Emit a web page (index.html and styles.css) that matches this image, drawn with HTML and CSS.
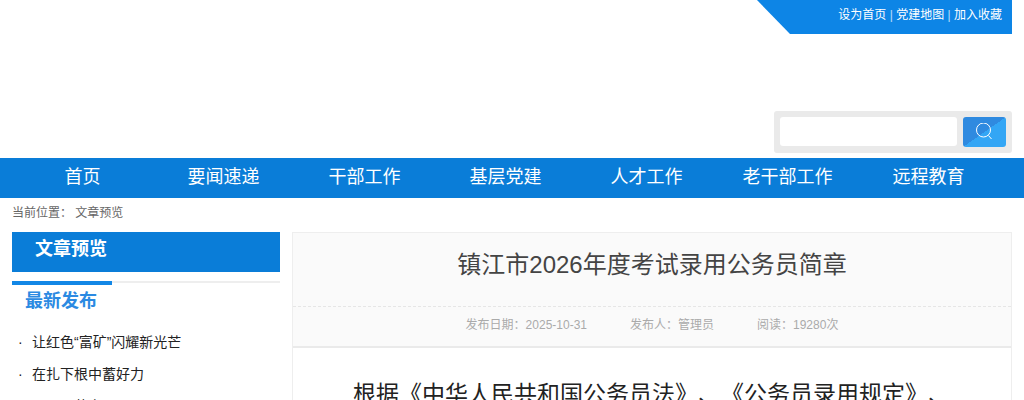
FILE: index.html
```html
<!DOCTYPE html>
<html lang="zh-CN">

<head>
    <meta charset="UTF-8" />
    <meta name="viewport" content="width=device-width, initial-scale=1" />
    <title>镇江市2026年度考试录用公务员简章</title>
    <link rel="stylesheet" href="styles.css">
</head>

<body>

    <div class="header">
        <div class="top-links">
            <a href="#">设为首页</a> <span class="sep">|</span> <a href="#">党建地图</a> <span class="sep">|</span> <a href="#">加入收藏</a>
        </div>
        <div class="search">
            <input type="text" class="search-input" />
            <button class="search-btn">
                <svg width="18" height="18" viewBox="0 0 18 18" fill="none" stroke="#fff" stroke-width="1">
                    <circle cx="7.5" cy="7" r="7" />
                    <path d="M12.5 12.5l3 3.5" />
                </svg>
            </button>
        </div>
    </div>

    <div class="nav">
        <a href="#">首页</a>
        <a href="#">要闻速递</a>
        <a href="#">干部工作</a>
        <a href="#">基层党建</a>
        <a href="#">人才工作</a>
        <a href="#">老干部工作</a>
        <a href="#">远程教育</a>
    </div>

    <div class="crumb">当前位置： 文章预览</div>

    <div class="main">
        <div class="side">
            <div class="side-title">文章预览</div>
            <div class="side-head"><span>最新发布</span></div>
            <ul class="side-list">
                <li><a href="#">让红色“富矿”闪耀新光芒</a></li>
                <li><a href="#">在扎下根中蓄好力</a></li>
                <li><a href="#">一二三落实</a></li>
            </ul>
        </div>

        <div class="article">
            <div class="article-head">
                <h1>镇江市2026年度考试录用公务员简章</h1>
                <div class="article-meta">
                    <span>发布日期：2025-10-31</span>
                    <span>发布人：管理员</span>
                    <span>阅读：19280次</span>
                </div>
            </div>
            <p class="article-text">根据《中华人民共和国公务员法》、《公务员录用规定》、</p>
        </div>
    </div>

</body>

</html>
```

FILE: styles.css
```css
body {
    margin: 0;
    height: 400px;
    overflow: hidden;
    background: #fff;
    font-family: "Liberation Sans", "Noto Sans CJK SC", sans-serif;
    color: #333;
}

a {
    color: inherit;
    text-decoration: none;
}

.header {
    height: 158px;
    padding: 0 12px;
    display: flex;
    flex-direction: column;
    align-items: flex-end;
    justify-content: space-between;
}

.top-links {
    width: 245px;
    height: 34px;
    padding-right: 10px;
    background: #0d85e6;
    clip-path: polygon(0 0, 100% 0, 100% 100%, 33px 100%);
    color: #fff;
    font-size: 12px;
    line-height: 31px;
    text-align: right;
}

.sep {
    opacity: 0.7;
}

.search {
    width: 238px;
    height: 42px;
    margin-bottom: 5px;
    padding: 6px;
    box-sizing: border-box;
    display: flex;
    justify-content: space-between;
    background: #eaeaea;
    border-radius: 3px;
}

.search-input {
    width: 177px;
    height: 29px;
    padding: 0;
    border: none;
    border-radius: 3px;
    background: #fff;
}

.search-btn {
    width: 43px;
    height: 30px;
    padding: 0;
    border: none;
    border-radius: 3px;
    background: linear-gradient(to bottom right, #2f8ae0 50%, #33a6f5 50%);
    display: flex;
    align-items: center;
    justify-content: center;
}

.nav {
    height: 40px;
    padding-left: 12px;
    display: flex;
    background: #0a7dd8;
}

.nav a {
    width: 141px;
    color: #fff;
    font-size: 18px;
    line-height: 38px;
    text-align: center;
}

.crumb {
    height: 34px;
    padding-left: 12px;
    color: #666;
    font-size: 12px;
    line-height: 31px;
}

.main {
    padding: 0 12px;
    display: flex;
    justify-content: space-between;
}

.side {
    width: 268px;
}

.side-title {
    height: 40px;
    padding-left: 23px;
    background: #0a7dd8;
    color: #fff;
    font-size: 18px;
    font-weight: bold;
    line-height: 35px;
}

.side-head {
    margin-top: 9px;
    height: 36px;
    border-top: 2px solid #eee;
    position: relative;
    padding-left: 13px;
    color: #2b8ae2;
    font-size: 18px;
    font-weight: bold;
    line-height: 36px;
}

.side-head::before {
    content: "";
    position: absolute;
    left: 0;
    top: -2px;
    width: 100px;
    height: 4px;
    background: #1287e6;
}

.side-list {
    margin: 7px 0 0;
    padding: 0;
    list-style: none;
}

.side-list li {
    height: 32px;
    padding-left: 20px;
    position: relative;
    color: #222;
    font-size: 14px;
    line-height: 32px;
}

.side-list li::before {
    content: "·";
    position: absolute;
    left: 6px;
}

.article {
    width: 718px;
    border: 1px solid #eee;
    border-bottom: none;
}

.article-head {
    background: #fafafa;
    border-bottom: 2px solid #eaeaea;
}

.article-head h1 {
    margin: 0;
    height: 73px;
    border-bottom: 1px dashed #e6e6e6;
    color: #444;
    font-size: 24px;
    font-weight: normal;
    line-height: 63px;
    text-align: center;
}

.article-meta {
    height: 39px;
    display: flex;
    justify-content: center;
    gap: 43px;
    color: #aaa;
    font-size: 12px;
    line-height: 37px;
}

.article-text {
    margin: 30px 0 0;
    color: #222;
    font-size: 23px;
    line-height: 32px;
    text-align: center;
    text-spacing-trim: space-all;
}
```
